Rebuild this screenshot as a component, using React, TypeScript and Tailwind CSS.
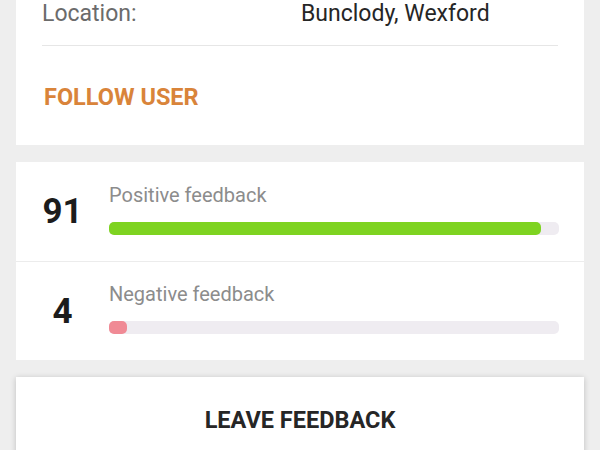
import React from 'react';

const font = { fontFamily: 'Roboto, "Noto Sans", sans-serif' };

function FeedbackRow({ count, label, pct, fill, divided }: { count: number; label: string; pct: number; fill: string; divided?: boolean }) {
  return (
    <div className={`flex h-[99px] items-center ${divided ? 'border-t border-[#ececec]' : ''}`}>
      <div className="w-[93px] text-center text-[35px] font-bold leading-none text-[#1c1c1c]">{count}</div>
      <div className="flex flex-1 flex-col gap-[15px] pr-[25px] pb-[5px]">
        <div className="text-[20px] leading-[23px] text-[#8c8c8c]">{label}</div>
        <div className="h-[13px] w-full rounded-[5px] bg-[#efecf1]">
          <div className={`h-full rounded-[5px] ${fill}`} style={{ width: `${pct}%` }} />
        </div>
      </div>
    </div>
  );
}

export default function App() {
  return (
    <div className="min-h-screen w-full overflow-hidden bg-[#eeeeee]" style={font}>
      {/* Profile details */}
      <div className="mx-[16px] -mt-[14px] bg-white px-[26px] pt-[14px]">
        <div className="flex border-b border-[#e6e6e6] pb-[17px] text-[23px] leading-[28px]">
          <span className="w-[259px] text-[#6b6b6b]">Location:</span>
          <span className="text-[#262626]">Bunclody, Wexford</span>
        </div>
        <div className="flex h-[99px] items-center pt-[4px] pl-[2px] text-[23.5px] font-bold text-[#d9843a]">FOLLOW USER</div>
      </div>

      {/* Feedback counts */}
      <div className="mx-[16px] mt-[17px] bg-white">
        <FeedbackRow count={91} label="Positive feedback" pct={96} fill="bg-[#7ed321]" />
        <FeedbackRow count={4} label="Negative feedback" pct={4} fill="bg-[#f08a95]" divided />
      </div>

      {/* Action */}
      <div className="mx-[16px] mt-[17px] flex h-[86px] items-center justify-center bg-white shadow-[0_1px_6px_rgba(0,0,0,0.2)]">
        <span className="text-[23.5px] font-bold leading-[26px] text-[#262626]">LEAVE FEEDBACK</span>
      </div>
    </div>
  );
}
